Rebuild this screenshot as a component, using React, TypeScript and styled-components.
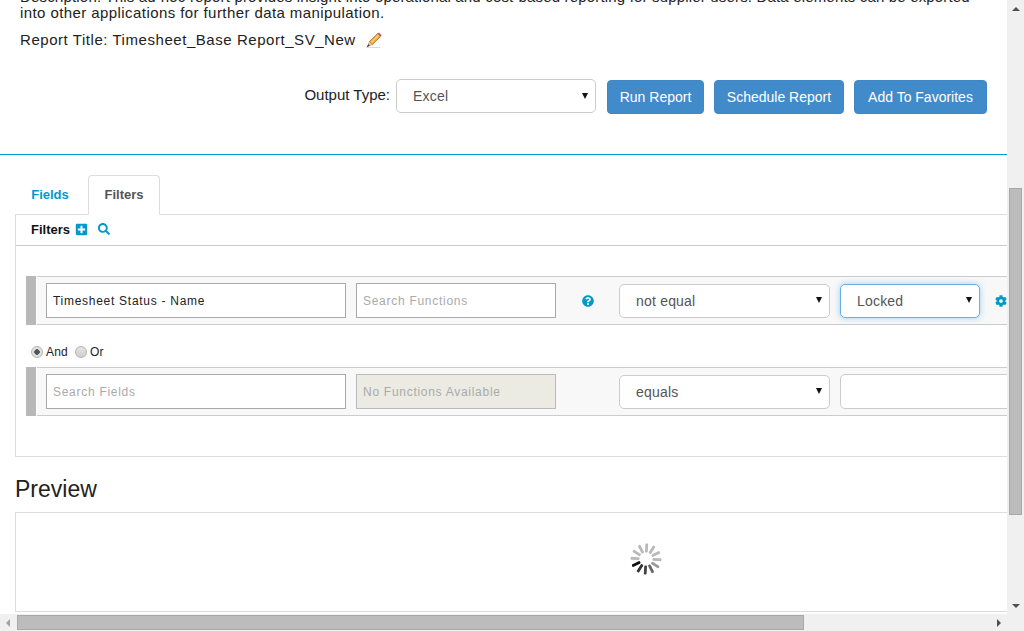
import styled, { createGlobalStyle } from 'styled-components';
import { FaSearch, FaPlusSquare, FaQuestionCircle, FaCog } from 'react-icons/fa';

const GlobalStyle = createGlobalStyle`
  html, body {
    margin: 0;
    padding: 0;
    overflow: hidden;
  }
  body {
    font-family: 'Liberation Sans', Arial, sans-serif;
    font-size: 14px;
    color: #222;
    background: #fff;
  }
`;

const Window = styled.div`
  width: 1024px;
  height: 631px;
  display: grid;
  grid-template-columns: 1007px 17px;
  grid-template-rows: 614px 17px;
  background: #f0f0f0;
  overflow: hidden;
`;

const Viewport = styled.main`
  background: #fff;
  overflow: hidden;
  min-width: 0;
`;

const ScrollTrackY = styled.div`
  display: flex;
  flex-direction: column;
  align-items: center;
  background: #f0f0f0;
`;

const ScrollTrackX = styled.div`
  display: flex;
  align-items: center;
  background: #f0f0f0;
`;

const Corner = styled.div`
  background: #f0f0f0;
`;

const Arrow = styled.div<{ $dir: 'up' | 'down' | 'left' | 'right' }>`
  width: 0;
  height: 0;
  flex: none;
  border-style: solid;
  border-color: transparent;
  ${p => (p.$dir === 'up' ? 'margin-top: 7px; border-width: 0 4px 4px; border-bottom-color: #505050;' : '')}
  ${p => (p.$dir === 'down' ? 'margin: auto 0 6px; border-width: 4px 4px 0; border-top-color: #505050;' : '')}
  ${p => (p.$dir === 'left' ? 'margin-left: 6px; border-width: 4px 4px 4px 0; border-right-color: #a3a3a3;' : '')}
  ${p => (p.$dir === 'right' ? 'margin: 0 6px 0 auto; border-width: 4px 0 4px 4px; border-left-color: #505050;' : '')}
`;

const ThumbY = styled.div`
  width: 13px;
  height: 327px;
  margin-top: 177px;
  box-sizing: border-box;
  background: #bcbcbc;
  border: 1px solid #a8a8a8;
`;

const ThumbX = styled.div`
  width: 787px;
  height: 15px;
  margin-left: 7px;
  box-sizing: border-box;
  background: #bcbcbc;
  border: 1px solid #a8a8a8;
`;

const Summary = styled.section`
  margin-top: -11px;
  padding: 0 20px;
  height: 165px;
  box-sizing: border-box;
  font-size: 15px;
`;

const Divider = styled.hr`
  margin: 0;
  height: 1px;
  border: 0;
  background: #00a0d1;
`;

const Description = styled.p`
  margin: 0;
  line-height: 16px;
  white-space: nowrap;
`;

const DescriptionLine = styled.span<{ $spacing: number }>`
  display: block;
  letter-spacing: ${p => p.$spacing}px;
`;

const TitleRow = styled.div`
  display: flex;
  align-items: center;
  gap: 9px;
  margin-top: 9px;
  line-height: 20px;
  letter-spacing: 0.55px;
`;

const PencilIcon = () => (
  <svg width="17" height="17" viewBox="0 0 17 17">
    <path d="M1 16 L15 16 L15 15 L3 15 Z" fill="#d8d8d8" />
    <path d="M4.5 9.5 L12.5 1.5 L15.5 4.5 L7.5 12.5 Z" fill="#f0a63a" stroke="#a8671c" strokeWidth="0.7" />
    <path d="M6 10.8 L13.7 3" stroke="#fbd77c" strokeWidth="1.1" />
    <path d="M12.5 1.5 L13.8 0.4 L16.6 3.2 L15.5 4.5 Z" fill="#c9505c" />
    <path d="M4.5 9.5 L7.5 12.5 L2.6 14.4 Z" fill="#ecd0a6" stroke="#a8671c" strokeWidth="0.5" />
    <path d="M3.4 12.2 L4.8 13.6 L1.4 15.6 Z" fill="#333" />
  </svg>
);

const OutputRow = styled.div`
  display: flex;
  justify-content: flex-end;
  align-items: flex-start;
  margin-top: 29px;
`;

const OutputLabel = styled.label`
  line-height: 32px;
  margin-right: 6px;
`;

const Select = styled.div<{ $width: number; $focus?: boolean }>`
  width: ${p => p.$width}px;
  height: 34px;
  box-sizing: border-box;
  display: flex;
  align-items: center;
  justify-content: space-between;
  padding: 0 7px 0 16px;
  background: #fff;
  border: 1px solid ${p => (p.$focus ? '#66afe9' : '#ccc')};
  border-radius: 5px;
  color: #555;
  flex: none;
  font-size: 14px;
  letter-spacing: 0.2px;
  ${p => (p.$focus ? 'box-shadow: 0 0 6px rgba(102, 175, 233, 0.6);' : '')}
`;

const Caret = styled.span`
  width: 0;
  height: 0;
  margin-top: -1px;
  border-style: solid;
  border-width: 6px 3px 0;
  border-color: #111 transparent transparent;
`;

const Button = styled.button<{ $width: number }>`
  height: 34px;
  margin: 1px 0 0 10px;
  padding: 0;
  box-sizing: border-box;
  background: #428bca;
  border: 1px solid #3f87c5;
  border-radius: 4px;
  color: #fff;
  font: 14px 'Liberation Sans', Arial, sans-serif;
  width: ${p => p.$width}px;
`;

const RunButton = styled(Button)`
  margin-left: 11px;
`;

const TabSection = styled.section`
  padding: 20px 0 0 15px;
`;

const TabBar = styled.div`
  display: flex;
  height: 40px;
  position: relative;
  z-index: 1;
`;

const Tab = styled.div<{ $active?: boolean }>`
  box-sizing: border-box;
  height: 40px;
  font-size: 13px;
  font-weight: bold;
  line-height: 38px;
  text-align: center;
  color: ${p => (p.$active ? '#555' : '#0099cc')};
  ${p =>
    p.$active
      ? `
    width: 72px;
    background: #fff;
    border: 1px solid #ddd;
    border-bottom-color: #fff;
    border-radius: 4px 4px 0 0;
  `
      : `
    width: 73px;
    padding: 1px 3px 0 0;
  `}
`;

const Panel = styled.div`
  margin-top: -1px;
  box-sizing: border-box;
  height: 243px;
  border: 1px solid #ddd;
  border-right: 0;
`;

const PanelHeader = styled.div`
  display: flex;
  align-items: center;
  height: 31px;
  padding: 0 0 2px 15px;
  box-sizing: border-box;
  border-bottom: 1px solid #ccc;
  font-size: 13px;
  font-weight: bold;
  color: #111;
`;

const HeaderIcon = styled.span<{ $gap: number; $size: number }>`
  display: inline-flex;
  margin-left: ${p => p.$gap}px;
  color: #0099cc;
  font-size: ${p => p.$size}px;
`;

const FilterList = styled.div`
  padding: 30px 0 0 10px;
  width: 1100px;
`;

const FilterRow = styled.div`
  display: flex;
  height: 49px;
`;

const Handle = styled.div`
  width: 10px;
  flex: none;
  background: #b8b8b8;
`;

const RowBody = styled.div`
  flex: 1;
  display: flex;
  align-items: center;
  margin-left: 1px;
  padding-left: 9px;
  box-sizing: border-box;
  background: #f8f8f8;
  border-top: 1px solid #ccc;
  border-bottom: 1px solid #ccc;
`;

const TextBox = styled.div<{ $muted?: boolean; $disabled?: boolean }>`
  width: 300px;
  height: 35px;
  box-sizing: border-box;
  flex: none;
  padding: 0 6px;
  display: flex;
  align-items: center;
  font-size: 12px;
  letter-spacing: 0.72px;
  border: 1px solid ${p => (p.$disabled ? '#bbb' : '#a9a9a9')};
  background: ${p => (p.$disabled ? '#ebebe4' : '#fff')};
  color: ${p => (p.$muted || p.$disabled ? '#aaa' : '#222')};
`;

const FunctionBox = styled(TextBox)`
  width: 200px;
  margin-left: 10px;
`;

const HelpSlot = styled.span`
  width: 63px;
  flex: none;
  display: flex;
  justify-content: center;
  color: #0099cc;
  font-size: 12px;
`;

const OperatorSelect = styled(Select)`
  margin-right: 10px;
`;

const ValueInput = styled.div`
  width: 300px;
  height: 35px;
  margin-top: -1px;
  box-sizing: border-box;
  flex: none;
  background: #fff;
  border: 1px solid #ccc;
  border-radius: 5px;
`;

const Gear = styled.span`
  display: inline-flex;
  margin-left: 15px;
  color: #0099cc;
  font-size: 12px;
`;

const Joiner = styled.div`
  display: flex;
  align-items: center;
  height: 42px;
  padding: 11px 0 0 5px;
  box-sizing: border-box;
  font-size: 12px;
  letter-spacing: 0.2px;
`;

const Radio = styled.span<{ $checked?: boolean }>`
  width: 12px;
  height: 12px;
  box-sizing: border-box;
  border-radius: 50%;
  border: 1px solid #b4b4b4;
  background: ${p => (p.$checked ? 'radial-gradient(circle, #555 0 2.5px, #e0e0e0 3px)' : 'linear-gradient(#e4e4e4, #cfcfcf)')};
  margin-right: 3px;
`;

const JoinerLabel = styled.span`
  margin-right: 7px;
`;

const PreviewSection = styled.section`
  padding-left: 15px;
`;

const PreviewTitle = styled.h2`
  margin: 19px 0 9px;
  font-size: 23px;
  font-weight: normal;
  line-height: 27px;
  color: #222;
`;

const PreviewBox = styled.div`
  height: 100px;
  box-sizing: border-box;
  border: 1px solid #ddd;
  border-right: 0;
  display: flex;
  align-items: center;
  justify-content: center;
  padding: 0 0 7px 268px;
  background: #fff;
`;

const spokeShades: Record<number, string> = { 8: '#111', 7: '#333', 6: '#444', 5: '#666', 4: '#999' };

const Spinner = () => (
  <svg width="32" height="32" viewBox="0 0 32 32">
    {Array.from({ length: 12 }, (_, i) => (
      <rect
        key={i}
        x="14.6"
        y="0.5"
        width="2.8"
        height="9"
        rx="1"
        fill={spokeShades[i] ?? '#b9b9b9'}
        transform={`rotate(${i * 30 + 3} 16 16)`}
      />
    ))}
  </svg>
);

export default function App() {
  return (
    <>
      <GlobalStyle />
      <Window>
        <Viewport>
          <Summary>
            <Description>
              <DescriptionLine $spacing={0.17}>
                Description: This ad-hoc report provides insight into operational and cost-based reporting for supplier users. Data elements can be exported
              </DescriptionLine>
              <DescriptionLine $spacing={0.42}>into other applications for further data manipulation.</DescriptionLine>
            </Description>
            <TitleRow>
              Report Title: Timesheet_Base Report_SV_New
              <PencilIcon />
            </TitleRow>
            <OutputRow>
              <OutputLabel>Output Type:</OutputLabel>
              <Select $width={200}>
                Excel
                <Caret />
              </Select>
              <RunButton $width={97}>Run Report</RunButton>
              <Button $width={130}>Schedule Report</Button>
              <Button $width={133}>Add To Favorites</Button>
            </OutputRow>
          </Summary>
          <Divider />
          <TabSection>
            <TabBar>
              <Tab>Fields</Tab>
              <Tab $active>Filters</Tab>
            </TabBar>
            <Panel>
              <PanelHeader>
                Filters
                <HeaderIcon $gap={5} $size={13}>
                  <FaPlusSquare />
                </HeaderIcon>
                <HeaderIcon $gap={10} $size={12}>
                  <FaSearch />
                </HeaderIcon>
              </PanelHeader>
              <FilterList>
                <FilterRow>
                  <Handle />
                  <RowBody>
                    <TextBox>Timesheet Status - Name</TextBox>
                    <FunctionBox $muted>Search Functions</FunctionBox>
                    <HelpSlot>
                      <FaQuestionCircle />
                    </HelpSlot>
                    <OperatorSelect $width={211}>
                      not equal
                      <Caret />
                    </OperatorSelect>
                    <Select $width={140} $focus>
                      Locked
                      <Caret />
                    </Select>
                    <Gear>
                      <FaCog />
                    </Gear>
                  </RowBody>
                </FilterRow>
                <Joiner>
                  <Radio $checked />
                  <JoinerLabel>And</JoinerLabel>
                  <Radio />
                  <JoinerLabel>Or</JoinerLabel>
                </Joiner>
                <FilterRow>
                  <Handle />
                  <RowBody>
                    <TextBox $muted>Search Fields</TextBox>
                    <FunctionBox $disabled>No Functions Available</FunctionBox>
                    <HelpSlot />
                    <OperatorSelect $width={211}>
                      equals
                      <Caret />
                    </OperatorSelect>
                    <ValueInput />
                  </RowBody>
                </FilterRow>
              </FilterList>
            </Panel>
          </TabSection>
          <PreviewSection>
            <PreviewTitle>Preview</PreviewTitle>
            <PreviewBox>
              <Spinner />
            </PreviewBox>
          </PreviewSection>
        </Viewport>
        <ScrollTrackY>
          <Arrow $dir="up" />
          <ThumbY />
          <Arrow $dir="down" />
        </ScrollTrackY>
        <ScrollTrackX>
          <Arrow $dir="left" />
          <ThumbX />
          <Arrow $dir="right" />
        </ScrollTrackX>
        <Corner />
      </Window>
    </>
  );
}
